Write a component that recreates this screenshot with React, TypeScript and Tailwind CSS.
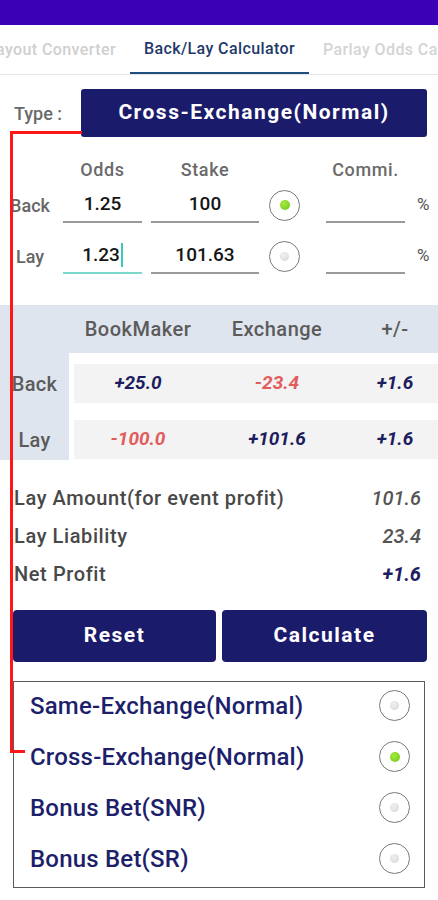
import React from 'react'

const font = { fontFamily: 'Roboto, "Noto Sans", sans-serif' }

function Radio({ checked }: { checked?: boolean }) {
  return (
    <div className="w-[31px] h-[31px] rounded-full border-[1.5px] border-[#7a7a7a] flex items-center justify-center bg-white">
      <div
        className={
          checked
            ? 'w-[10px] h-[10px] rounded-full bg-[radial-gradient(circle_at_40%_35%,#a6ec3c,#6cc417)]'
            : 'w-[9px] h-[9px] rounded-full bg-[radial-gradient(circle_at_40%_35%,#f0f0f0,#d6d6d6)]'
        }
      />
    </div>
  )
}

function Field({ value, width, active }: { value?: string; width: string; active?: boolean }) {
  return (
    <div
      className={`${width} h-[36px] flex items-center justify-center border-b-2 ${
        active ? 'border-[#7ad8cc]' : 'border-[#9a9a9a]'
      } text-[19px] font-medium text-[#151515]`}
    >
      <span>{value}</span>
      {active && <span className="w-[2px] h-[24px] bg-[#3cc8b4] ml-[1px]" />}
    </div>
  )
}

export default function App() {
  const types = [
    { label: 'Same-Exchange(Normal)', checked: false },
    { label: 'Cross-Exchange(Normal)', checked: true },
    { label: 'Bonus Bet(SNR)', checked: false },
    { label: 'Bonus Bet(SR)', checked: false },
  ]

  const summary = [
    { label: 'Lay Amount(for event profit)', value: '101.6', strong: false },
    { label: 'Lay Liability', value: '23.4', strong: false },
    { label: 'Net Profit', value: '+1.6', strong: true },
  ]

  return (
    <div className="relative w-[438px] h-[900px] bg-white overflow-hidden" style={font}>
      <div className="h-[25px] bg-[#3b00b6]" />

      {/* tabs */}
      <div className="h-[50px] flex border-b border-[#e6e6e6] overflow-hidden whitespace-nowrap text-[16px] font-medium tracking-[0.4px]">
        <div className="w-[130px] shrink-0 flex items-center justify-end pr-[14px] text-[#cfcfcf]">
          Payout Converter
        </div>
        <div className="w-[179px] shrink-0 flex items-center justify-center text-[#1f3a6a] border-b-2 border-[#1f4f7e]">
          Back/Lay Calculator
        </div>
        <div className="w-[129px] shrink-0 flex items-center pl-[14px] text-[#d4d4d4] overflow-hidden">
          Parlay Odds Calculator
        </div>
      </div>

      {/* type */}
      <div className="flex items-center mt-[14px] pr-[11px]">
        <div className="w-[81px] pl-[14px] text-[18px] font-medium text-[#6a6a6a]">Type :</div>
        <div className="flex-1 h-[48px] rounded-[3px] bg-[#1b1b6b] flex items-center justify-center text-white text-[21px] font-bold tracking-[1.5px]">
          Cross-Exchange(Normal)
        </div>
      </div>

      {/* inputs */}
      <div className="mt-[21px] flex h-[22px] items-center text-[18px] font-medium tracking-[0.6px] text-[#6a6a6a]">
        <div className="w-[63px]" />
        <div className="w-[79px] text-center">Odds</div>
        <div className="w-[9px]" />
        <div className="w-[108px] text-center">Stake</div>
        <div className="w-[67px]" />
        <div className="w-[79px] text-center">Commi.</div>
      </div>
      <div className="mt-[7px] flex flex-col gap-[15px]">
        {[
          { label: 'Back', odds: '1.25', stake: '100', checked: true, active: false },
          { label: 'Lay', odds: '1.23', stake: '101.63', checked: false, active: true },
        ].map((r) => (
          <div key={r.label} className="flex items-end">
            <div className="w-[60px] mr-[3px] h-[36px] flex items-center justify-center text-[18px] font-medium text-[#666]">
              {r.label}
            </div>
            <Field value={r.odds} width="w-[79px]" active={r.active} />
            <div className="w-[9px]" />
            <Field value={r.stake} width="w-[108px]" />
            <div className="w-[67px] h-[36px] flex items-center pl-[10px]">
              <Radio checked={r.checked} />
            </div>
            <Field width="w-[79px]" />
            <div className="h-[36px] flex items-center pl-[12px] text-[17px] text-[#555]">%</div>
          </div>
        ))}
      </div>

      {/* result table */}
      <div className="mt-[31px]">
        <div className="h-[48px] bg-[#dfe5ee] flex items-center pl-[74px] text-[20px] font-medium tracking-[0.5px] text-[#5b5b5b]">
          <div className="w-[128px] text-center">BookMaker</div>
          <div className="w-[150px] text-center">Exchange</div>
          <div className="flex-1 text-center">+/-</div>
        </div>
        <div className="flex">
          <div className="w-[69px] bg-[#dfe5ee] pt-[11px] pb-[1px] flex flex-col gap-[17px] text-[20px] font-medium tracking-[0.3px] text-[#5b5b5b]">
            <div className="h-[39px] flex items-center justify-center">Back</div>
            <div className="h-[39px] flex items-center justify-center">Lay</div>
          </div>
          <div className="flex-1 pl-[5px] pt-[11px] flex flex-col gap-[17px] text-[19px] font-bold italic">
            <div className="h-[39px] bg-[#f3f3f3] flex items-center">
              <div className="w-[128px] text-center text-[#1d1d5e]">+25.0</div>
              <div className="w-[150px] text-center text-[#e25c5c]">-23.4</div>
              <div className="flex-1 text-center text-[#1d1d5e]">+1.6</div>
            </div>
            <div className="h-[39px] bg-[#f3f3f3] flex items-center">
              <div className="w-[128px] text-center text-[#e25c5c]">-100.0</div>
              <div className="w-[150px] text-center text-[#1d1d5e]">+101.6</div>
              <div className="flex-1 text-center text-[#1d1d5e]">+1.6</div>
            </div>
          </div>
        </div>
      </div>

      {/* summary */}
      <div className="mt-[19px] pl-[14px] pr-[17px]">
        {summary.map((s) => (
          <div key={s.label} className="h-[38px] flex items-center justify-between text-[20px]">
            <span className="font-medium tracking-[0.6px] text-[#484848]">{s.label}</span>
            <span className={s.strong ? 'italic font-bold text-[#1d1d5e]' : 'italic font-medium text-[#555]'}>
              {s.value}
            </span>
          </div>
        ))}
      </div>

      {/* buttons */}
      <div className="mt-[17px] flex gap-[6px] pl-[13px] pr-[11px]">
        <button className="w-[203px] h-[52px] rounded-[4px] bg-[#1b1b6b] text-white text-[21px] font-bold tracking-[1.5px]">
          Reset
        </button>
        <button className="flex-1 h-[52px] rounded-[4px] bg-[#1b1b6b] text-white text-[21px] font-bold tracking-[1.5px]">
          Calculate
        </button>
      </div>

      {/* type list */}
      <div className="mt-[19px] ml-[13px] w-[412px] border-[1.5px] border-[#5a5a5a] pb-[1px]">
        {types.map((t) => (
          <div key={t.label} className="h-[51px] pb-[4px] flex items-center justify-between pl-[16px] pr-[14px]">
            <span className="text-[24px] font-medium tracking-[0.2px] text-[#1d1f6b]">{t.label}</span>
            <Radio checked={t.checked} />
          </div>
        ))}
      </div>

      {/* red annotation line */}
      <div className="absolute left-[10px] top-[131px] w-[72px] h-[622px] border-t-[3px] border-l-[3px] border-[#ff1616]" />
      <div className="absolute left-[10px] top-[750px] w-[15px] h-[3px] bg-[#ff1616]" />
    </div>
  )
}
